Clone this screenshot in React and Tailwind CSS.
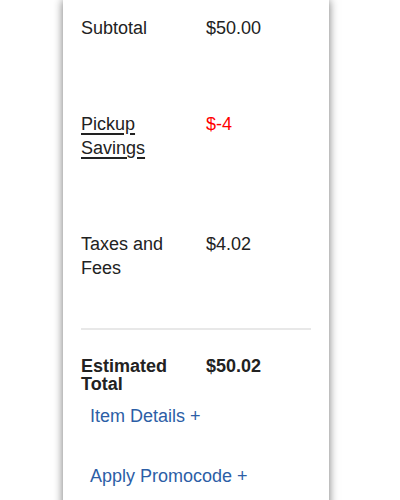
export default function App() {
  return (
    <div className="w-[400px] h-[500px] overflow-hidden bg-white font-['Liberation_Sans',Arial,sans-serif] text-[18px] text-[#222]">
      <div className="ml-[63px] w-[266px] bg-white shadow-[0_0_9px_rgba(0,0,0,0.55)] pl-[18px] pr-[18px] pt-[16px] pb-[60px]">
        <div className="flex leading-6">
          <div className="w-[125px] pr-[12px]">Subtotal</div>
          <div>$50.00</div>
        </div>
        <div className="flex leading-6 mt-[72px]">
          <div className="w-[125px] pr-[12px]">
            <span className="underline underline-offset-[3px] decoration-[1.5px]">Pickup Savings</span>
          </div>
          <div className="text-[#ff0000]">$-4</div>
        </div>
        <div className="flex leading-6 mt-[72px]">
          <div className="w-[125px] pr-[12px]">Taxes and Fees</div>
          <div>$4.02</div>
        </div>
        <div className="mt-[48px] h-[2px] bg-[#e8e8e8]" />
        <div className="flex leading-[18px] mt-[27px] font-bold">
          <div className="w-[125px] pr-[12px]">Estimated Total</div>
          <div>$50.02</div>
        </div>
        <div className="mt-[11px] pl-[9px] leading-6 text-[#2c5ea6]">Item Details +</div>
        <div className="mt-[36px] pl-[9px] leading-6 text-[#2c5ea6]">Apply Promocode +</div>
      </div>
    </div>
  );
}
